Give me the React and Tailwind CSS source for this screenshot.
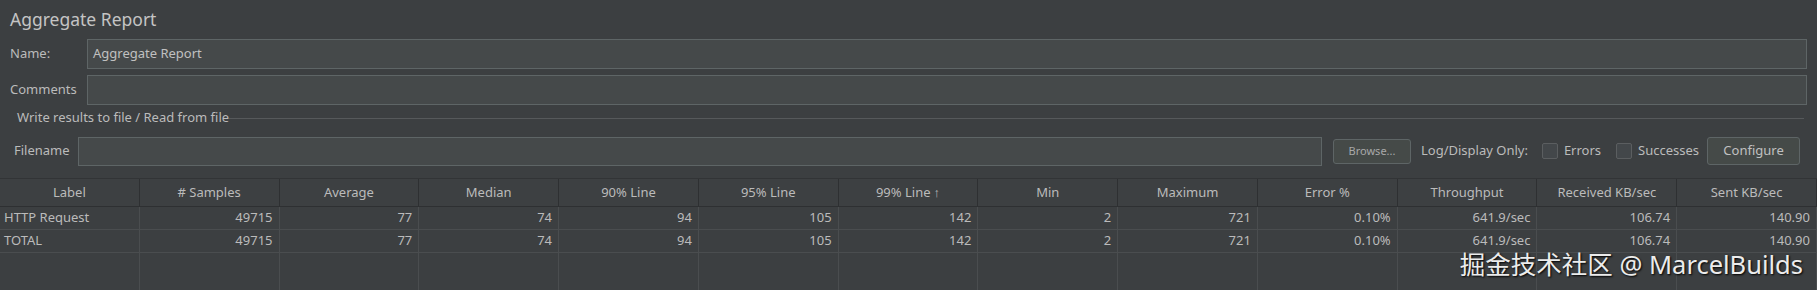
import React from 'react'

const columns = [
  'Label', '# Samples', 'Average', 'Median', '90% Line', '95% Line', '99% Line',
  'Min', 'Maximum', 'Error %', 'Throughput', 'Received KB/sec', 'Sent KB/sec',
]

const rows = [
  ['HTTP Request', '49715', '77', '74', '94', '105', '142', '2', '721', '0.10%', '641.9/sec', '106.74', '140.90'],
  ['TOTAL', '49715', '77', '74', '94', '105', '142', '2', '721', '0.10%', '641.9/sec', '106.74', '140.90'],
]

export default function App() {
  return (
    <div
      className="relative w-[1817px] h-[290px] overflow-hidden bg-[#3c3f41] text-[#bbbbbb] text-[13px]"
      style={{ fontFamily: '"Noto Sans", "Open Sans", sans-serif' }}
    >
      {/* Title */}
      <div className="h-[38px] pl-[10px] pt-[7px] text-[17.5px] leading-[24px] text-[#c4c4c4]">
        Aggregate Report
      </div>

      {/* Name / Comments */}
      <div className="flex items-center h-[31px] pr-[10px]">
        <span className="w-[87px] pl-[10px]">Name:</span>
        <div className="flex-1 h-[30px] bg-[#45494a] border border-[#5e6566] flex items-center pl-[5px] text-[#c0c0c0]">
          Aggregate Report
        </div>
      </div>
      <div className="flex items-center h-[31px] mt-[5px] pr-[10px]">
        <span className="w-[87px] pl-[10px]">Comments</span>
        <div className="flex-1 h-[30px] bg-[#45494a] border border-[#5e6566]" />
      </div>

      {/* Group: write results */}
      <div className="flex items-center h-[20px] mt-[3px] pl-[17px] pr-[13px]">
        <span className="whitespace-nowrap">Write results to file / Read from file</span>
        <div className="flex-1 h-px bg-[#56595b]" />
      </div>

      <div className="flex items-center h-[30px] mt-[8px] pr-[16px]">
        <span className="w-[78px] pl-[14px]">Filename</span>
        <div className="w-[1244px] h-[29px] bg-[#45494a] border border-[#5e6566]" />
        <div className="ml-[11px] w-[78px] h-[25px] rounded-[3px] border border-[#5e6566] bg-[#454a48] flex items-center justify-center text-[11px] text-[#a8a8a8]">
          Browse...
        </div>
        <span className="ml-[10px] whitespace-nowrap">Log/Display Only:</span>
        <div className="ml-[14px] w-[16px] h-[16px] rounded-[2px] border border-[#5b5e60] bg-[#43474a]" />
        <span className="ml-[6px]">Errors</span>
        <div className="ml-[15px] w-[16px] h-[16px] rounded-[2px] border border-[#5b5e60] bg-[#43474a]" />
        <span className="ml-[6px] w-[63px] overflow-hidden whitespace-nowrap">Successes</span>
        <div className="ml-[6px] w-[93px] h-[28px] rounded-[3px] border border-[#5e6566] bg-[#454a48] flex items-center justify-center text-[13px] text-[#c0c0c0]">
          Configure
        </div>
      </div>

      {/* Table */}
      <div className="mt-[12px]">
        <div className="grid grid-cols-13 h-[29px] border-t border-[#323436]">
          {columns.map((c, i) => (
            <div
              key={c}
              className="flex items-center justify-center border-r border-b border-[#2e3032] bg-[#3d4042] whitespace-nowrap"
            >
              {c}
              {i === 6 && <span className="ml-[3px] text-[13px] font-bold">↑</span>}
            </div>
          ))}
        </div>
        {rows.map((r, ri) => (
          <div key={ri} className="grid grid-cols-13 h-[23px]">
            {r.map((v, i) => (
              <div
                key={i}
                className={`flex items-center border-r border-b border-[#4a4d4f] whitespace-nowrap ${
                  i === 0 ? 'pl-[4px]' : 'justify-end pr-[6px]'
                }`}
              >
                {v}
              </div>
            ))}
          </div>
        ))}
        <div className="grid grid-cols-13 h-[50px]">
          {columns.map((c) => (
            <div key={c} className="border-r border-[#4a4d4f]" />
          ))}
        </div>
      </div>

      {/* Watermark */}
      <div
        className="absolute right-[14px] bottom-[10px] text-[25.5px] leading-[32px] text-[#ececec]"
        style={{ fontFamily: '"Noto Sans", "Noto Sans CJK SC", sans-serif', textShadow: '1px 1px 2px #000' }}
      >
        掘金技术社区 @ MarcelBuilds
      </div>
    </div>
  )
}
